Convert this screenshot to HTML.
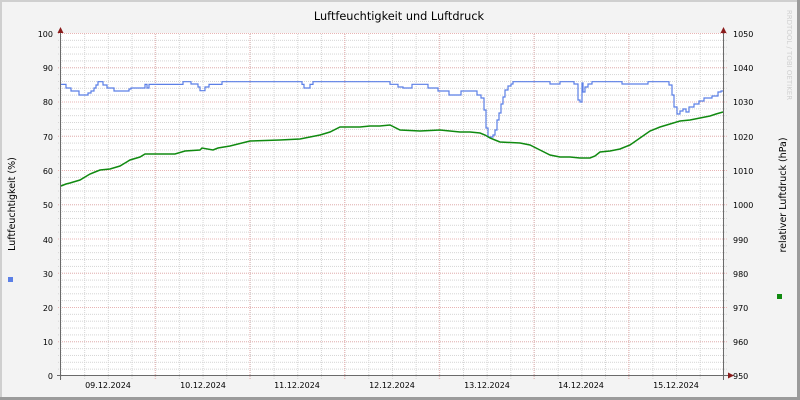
<!DOCTYPE html>
<html><head><meta charset="utf-8"><style>
html,body{margin:0;padding:0;background:#f3f3f3;}
svg{display:block;font-family:"DejaVu Sans","Liberation Sans",sans-serif;}
</style></head><body>
<svg width="800" height="400" viewBox="0 0 800 400" xmlns="http://www.w3.org/2000/svg">
<defs>
<pattern id="hmin" x="0" y="33" width="800" height="6.85" patternUnits="userSpaceOnUse">
<line x1="0" y1="0.5" x2="800" y2="0.5" stroke="#d4d4d4" stroke-width="1" stroke-dasharray="1,1"/></pattern>
<pattern id="vmin" x="60.5" y="0" width="23.675" height="400" patternUnits="userSpaceOnUse">
<line x1="0.5" y1="0" x2="0.5" y2="400" stroke="#d4d4d4" stroke-width="1" stroke-dasharray="1,1"/></pattern>
<pattern id="hmaj" x="0" y="33" width="800" height="34.25" patternUnits="userSpaceOnUse">
<line x1="0" y1="0.5" x2="800" y2="0.5" stroke="#e8b4b4" stroke-width="1" stroke-dasharray="1,1"/></pattern>
<pattern id="vmaj" x="154.7" y="0" width="94.7" height="400" patternUnits="userSpaceOnUse">
<line x1="0.5" y1="0" x2="0.5" y2="400" stroke="#e8b4b4" stroke-width="1" stroke-dasharray="1,1"/></pattern>
</defs>
<rect x="0" y="0" width="800" height="400" fill="#f3f3f3"/>
<rect x="0" y="0" width="800" height="2" fill="#cfcfcf"/>
<rect x="0" y="0" width="2" height="400" fill="#cfcfcf"/>
<rect x="797" y="0" width="3" height="400" fill="#9b9b9b"/>
<rect x="0" y="397" width="800" height="3" fill="#9b9b9b"/>
<rect x="61" y="33" width="662" height="343" fill="#ffffff"/>
<rect x="57" y="33" width="670" height="343" fill="url(#hmin)"/>
<rect x="61" y="33" width="662" height="346" fill="url(#vmin)"/>
<rect x="57" y="33" width="670" height="343" fill="url(#hmaj)"/>
<rect x="61" y="33" width="662" height="346" fill="url(#vmaj)"/>

<polyline fill="none" stroke="#5b7fe6" stroke-width="1.2" points="61,84.4 66,84.4 66,88 71,88 71,91 79,91 79,95 88,95 88,93 91,93 91,91 94,91 94,88 96,88 96,85 98,85 98,81.7 103,81.7 103,85 107,85 107,88 114,88 114,91 129,91 129,89 131,89 131,88 145,88 145,84.4 147,84.4 147,88 149,88 149,84.4 183,84.4 183,81.7 191,81.7 191,84 198,84 198,87 200,87 200,90.7 205,90.7 205,87 209,87 209,84.4 222,84.4 222,81.7 302,81.7 302,84.4 304,84.4 304,88 310,88 310,84.4 313,84.4 313,81.7 390,81.7 390,84.3 398,84.3 398,87 403,87 403,88 412,88 412,84.3 428,84.3 428,88 438,88 438,91 449,91 449,95 461,95 461,91 477,91 477,95 481,95 481,98 484,98 484,110 486,110 486,128 488,128 488,137 493,137 493,135 495,135 495,130 497,130 497,120 499,120 499,113 501,113 501,104 503,104 503,97 505,97 505,90 508,90 508,86 511,86 511,84 513,84 513,81.7 550,81.7 550,84 560,84 560,81.7 574,81.7 574,84 578,84 578,100 580,100 580,102 582,102 582,83 583,83 583,92 585,92 585,87 588,87 588,84 592,84 592,81.7 622,81.7 622,84 648,84 648,81.7 669,81.7 669,85 672,85 672,95 674,95 674,107 677,107 677,114 680,114 680,111 683,111 683,109 686,109 686,112 689,112 689,107 694,107 694,104 699,104 699,101 704,101 704,98 712,98 712,96 718,96 718,92 721,92 721,91 723,91"/>

<polyline fill="none" stroke="#108a10" stroke-width="1.5" points="61,186 66,184 70,183 80,180 85,177 90,174 95,172 100,170 110,169 120,166 125,163 130,160 140,157 145,154 160,154 175,154 185,151 200,150 202,148 213,150 218,148 230,146 250,141 280,140 300,139 320,135 330,132 340,127 360,127 370,126 380,126 390,125 400,130 420,131 440,130 460,132 470,132 480,133 485,135 490,138 495,140 500,142 520,143 530,145 540,150 550,155 560,157 570,157 580,158 590,158 595,156 600,152 610,151 620,149 630,145 640,138 650,131 660,127 670,124 680,121 690,120 700,118 710,116 716,114 723,112"/>

<line x1="60.5" y1="33" x2="60.5" y2="380" stroke="#6a6a6a" stroke-width="1"/>
<line x1="723.5" y1="33" x2="723.5" y2="380" stroke="#6a6a6a" stroke-width="1"/>
<line x1="57" y1="375.5" x2="728" y2="375.5" stroke="#6a6a6a" stroke-width="1"/>
<polygon points="57.5,33 63.5,33 60.5,27" fill="#8a1c1c"/>
<polygon points="720.5,33 726.5,33 723.5,27" fill="#8a1c1c"/>
<polygon points="728,372.5 728,378.5 734,375.5" fill="#8a1c1c"/>

<g font-size="8" fill="#000" text-anchor="end">
<text x="53" y="37">100</text><text x="53" y="71">90</text><text x="53" y="105">80</text>
<text x="53" y="140">70</text><text x="53" y="174">60</text><text x="53" y="208">50</text>
<text x="53" y="243">40</text><text x="53" y="277">30</text><text x="53" y="311">20</text>
<text x="53" y="345">10</text><text x="53" y="379">0</text>
</g>
<g font-size="8" fill="#000" text-anchor="start">
<text x="733" y="37">1050</text><text x="733" y="71">1040</text><text x="733" y="105">1030</text>
<text x="733" y="140">1020</text><text x="733" y="174">1010</text><text x="733" y="208">1000</text>
<text x="733" y="243">990</text><text x="733" y="277">980</text><text x="733" y="311">970</text>
<text x="733" y="345">960</text><text x="733" y="379">950</text>
</g>
<g font-size="8" fill="#000" text-anchor="middle">
<text x="108" y="388">09.12.2024</text><text x="203" y="388">10.12.2024</text>
<text x="297" y="388">11.12.2024</text><text x="392" y="388">12.12.2024</text>
<text x="487" y="388">13.12.2024</text><text x="581" y="388">14.12.2024</text>
<text x="676" y="388">15.12.2024</text>
</g>
<text x="399" y="20" font-size="11.3" text-anchor="middle" fill="#000">Luftfeuchtigkeit und Luftdruck</text>
<text transform="translate(15,204) rotate(-90)" font-size="9.5" text-anchor="middle" fill="#000">Luftfeuchtigkeit (%)</text>
<text transform="translate(786,195) rotate(-90)" font-size="9.5" text-anchor="middle" fill="#000">relativer Luftdruck (hPa)</text>
<text transform="translate(787,55) rotate(90)" font-size="7" text-anchor="middle" fill="#d0d0d0">RRDTOOL / TOBI OETIKER</text>
<rect x="8" y="277" width="5" height="5" fill="#5b7fe6"/>
<rect x="777" y="294" width="5" height="5" fill="#108a10"/>
</svg>
</body></html>
